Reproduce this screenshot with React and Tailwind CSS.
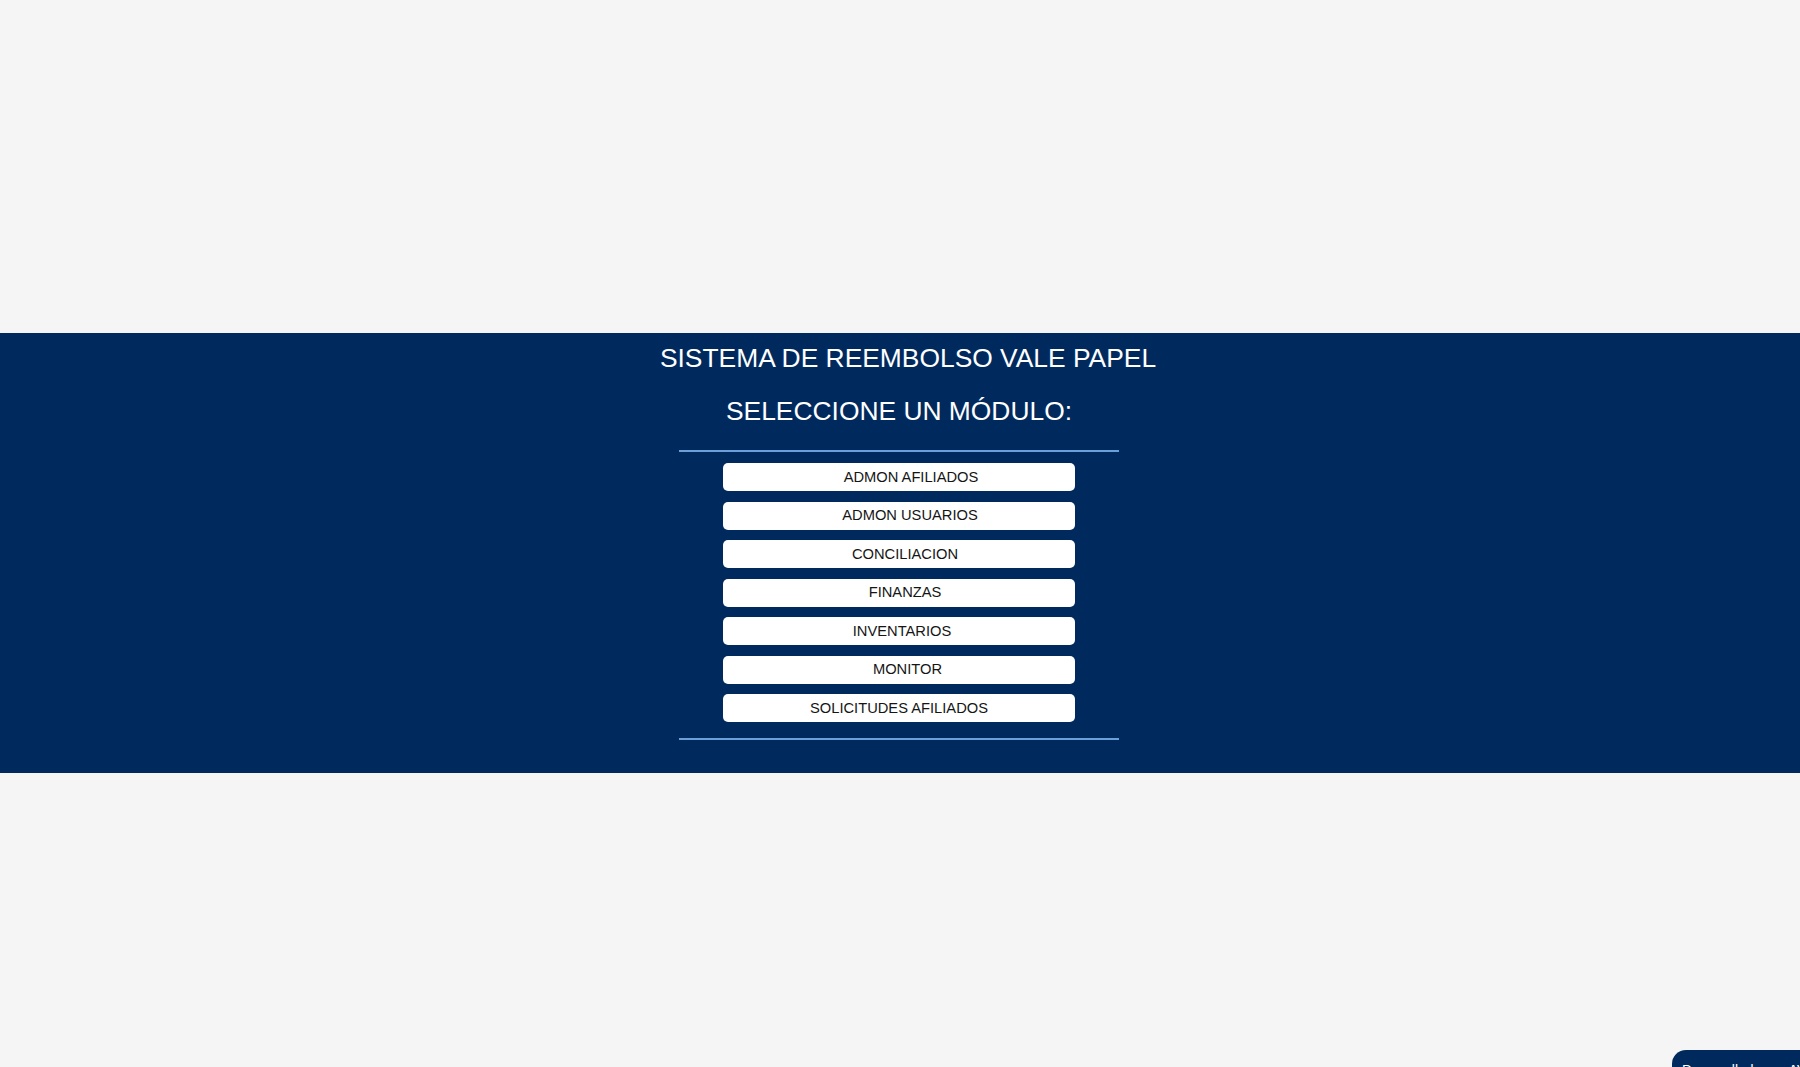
const modules = [
  { label: 'ADMON AFILIADOS', pad: 'pl-[24px]' },
  { label: 'ADMON USUARIOS', pad: 'pl-[22px]' },
  { label: 'CONCILIACION', pad: 'pl-[12px]' },
  { label: 'FINANZAS', pad: 'pl-[12px]' },
  { label: 'INVENTARIOS', pad: 'pl-[6px]' },
  { label: 'MONITOR', pad: 'pl-[17px]' },
  { label: 'SOLICITUDES AFILIADOS', pad: 'pl-0' },
];

export default function App() {
  return (
    <div
      className="min-h-screen bg-[#f5f5f5] pt-[333px]"
      style={{ fontFamily: '"Liberation Sans", Arial, sans-serif' }}
    >
      <div className="bg-[#002a5d] pt-[10px] pb-[33px]">
        <h1 className="pl-[16px] text-center text-[26.4px] leading-[30px] font-normal text-white">
          SISTEMA DE REEMBOLSO VALE PAPEL
        </h1>
        <div className="flex flex-col items-center pr-[2px]">
          <h2 className="mt-[23px] text-center text-[26.4px] leading-[30px] font-normal text-white">
            SELECCIONE UN MÓDULO:
          </h2>
          <div className="mt-[24px] h-[2px] w-[440px] bg-[#6b9fda]" />
        </div>
        <div className="mt-[11px] flex flex-col items-center gap-[10.5px] pr-[2px]">
          {modules.map((m) => (
            <button
              key={m.label}
              className={`flex h-[28px] w-[352px] items-center justify-center rounded-[5px] bg-white text-[14.7px] text-[#151515] ${m.pad}`}
            >
              {m.label}
            </button>
          ))}
        </div>
        <div className="flex justify-center pr-[2px]">
          <div className="mt-[15.5px] h-[2px] w-[440px] bg-[#6b9fda]" />
        </div>
      </div>
      <div className="fixed top-[1050px] left-[1672px] whitespace-nowrap rounded-tl-[14px] rounded-tr-[14px] bg-[#002a5d] px-[10px] pt-[10px] pb-[10px] text-[14px] text-white">
        Desarrollado por AVANTIA
      </div>
    </div>
  );
}
